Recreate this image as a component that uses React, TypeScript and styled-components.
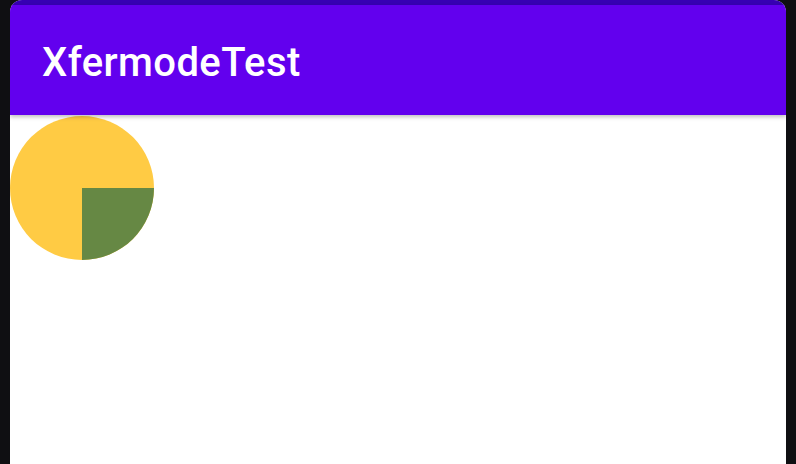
import React from "react";
import styled, { createGlobalStyle } from "styled-components";

const Global = createGlobalStyle`
  html, body { margin: 0; padding: 0; background: #0f0f12; }
  body { width: 796px; height: 464px; overflow: hidden; }
`;

const Frame = styled.div`
  width: 796px;
  height: 464px;
  box-sizing: border-box;
  padding: 0 10px;
  background: #0f0f12;
  display: flex;
`;

const Screen = styled.div`
  flex: 1;
  display: flex;
  flex-direction: column;
  background: #ffffff;
  border-radius: 12px 12px 0 0;
  overflow: hidden;
`;

const StatusBar = styled.div`
  height: 5px;
  background: #3700b3;
  flex: none;
`;

const AppBar = styled.header`
  height: 110px;
  flex: none;
  box-sizing: border-box;
  background: #6200ee;
  display: flex;
  align-items: center;
  padding-left: 32px;
  padding-top: 4px;
  box-shadow: 0 2px 4px rgba(0, 0, 0, 0.25);
  position: relative;
  z-index: 1;
`;

const Title = styled.h1`
  margin: 0;
  font-family: Roboto, "Noto Sans", sans-serif;
  font-weight: 500;
  font-size: 40px;
  color: #ffffff;
  letter-spacing: 0.4px;
`;

const Content = styled.main`
  flex: 1;
  padding-top: 1px;
`;

const Canvas = styled.svg`
  display: block;
`;

export default function App() {
  return (
    <>
      <Global />
      <Frame>
        <Screen>
          <StatusBar />
          <AppBar>
            <Title>XfermodeTest</Title>
          </AppBar>
          <Content>
            <Canvas width={144} height={144} viewBox="0 0 144 144">
              <circle cx={72} cy={72} r={72} fill="#ffcb44" />
              <path d="M72 72 H144 A72 72 0 0 1 72 144 Z" fill="#668844" />
            </Canvas>
          </Content>
        </Screen>
      </Frame>
    </>
  );
}
